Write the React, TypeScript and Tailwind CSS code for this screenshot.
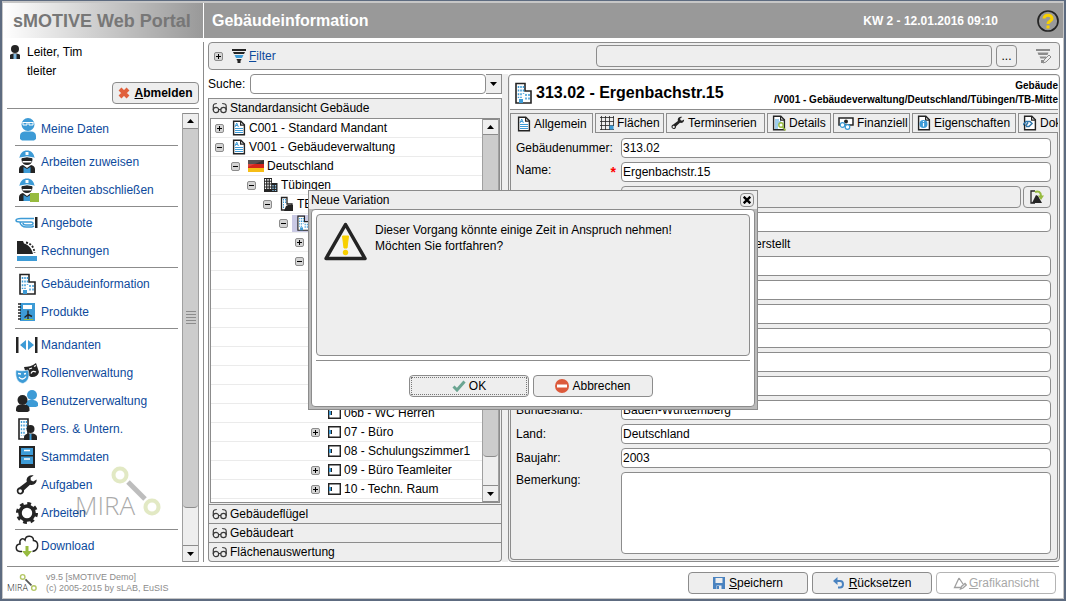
import React from 'react';
import clsx from 'clsx';

const INK = '#242424';
const BLUE = '#3d9bd6';
const GREEN = '#97bb3f';

type IconProps = { className?: string };

const Building = ({ className = 'w-[18px] h-[22px]' }: IconProps) => (
    <svg className={className} viewBox="2 0 18 22" fill="none">
        <path d="M4 21V1.500h9V9h6v12z" fill="#fff" stroke={INK} strokeWidth="1.600" />
        <path d="M6.500 4v12M9 4v12M11.500 4v8M14 12v7M17 12v7" stroke={BLUE} strokeWidth="1.500" strokeDasharray="2 1.600" />
        <path d="M7 17h4v4H7z" fill={BLUE} />
    </svg>
);

const Doc = ({ className = 'w-3.5 h-4', children }: IconProps & { children?: React.ReactNode }) => (
    <svg className={className} viewBox="0 0 14 16" fill="none">
        <path d="M1.600 1.200h7.200l3.600 3.600v10H1.600z" fill="#fff" stroke={INK} strokeWidth="1.400" />
        <path d="M8.600 1.200v4h4" stroke={INK} strokeWidth="1.200" />
        {children}
    </svg>
);

const DocText = () => (
    <Doc>
        <path d="M3 8.500h8M3 10.500h8M3 12.500h8" stroke={BLUE} strokeWidth="1" />
        <path d="M3 7l1.700-4 1.700 4M3.700 5.500h2" stroke={BLUE} strokeWidth="1" />
    </Doc>
);

const Wrench = ({ className = 'w-[22px] h-[22px]' }: IconProps) => (
    <svg className={className} viewBox="0 0 22 22">
        <path
            fill={INK}
            fillRule="evenodd"
            d="M20.600 5.600l-3.400 2-2.500-1.300-.1-2.800L17.700 1.600C14.800.400 11 2 10.600 5.600c-.1 1 .1 1.700.2 2.100L3.500 13.200C1 13.800.300 16 1 18.200c.9 2.400 4 3 5.800 1.300 1.100-1 1.400-2 1.200-3.200l6-5.500c3.800 1 7-1.600 6.600-5.200zM4.200 15.300a1.800 1.800 0 1 1 0 3.600 1.800 1.800 0 0 1 0-3.600z"
        />
    </svg>
);

const UserBlue = () => (
    <svg className="w-[22px] h-[24px]" viewBox="0 0 22 24">
        <circle cx="12" cy="7.500" r="6.500" fill={BLUE} />
        <path d="M4 22v-3c0-3.500 3-4.500 5-4.500h6c3 0 5 1.500 5 4.500v3l-2 1.500H6z" fill={BLUE} />
        <path d="M6.500 5.500h11M7 5.500v2.500h4V5.500M13 5.500v2.500h4V5.500" fill="none" stroke="#fff" strokeWidth="1" />
    </svg>
);

const Worker = ({ done }: { done?: boolean }) => (
    <svg className="w-6 h-6" viewBox="0 0 24 24">
        <circle cx="12" cy="9.500" r="5.500" fill={INK} />
        <path d="M4 23v-4c0-2.500 2-3.500 4-4l4 3 4-3c2 .5 4 1.500 4 4v4z" fill={INK} />
        <path d="M8.500 23v-6l3.500 2 3.500-2v6z" fill={BLUE} />
        <path d="M7.500 11h9v1.500h-9z" fill="#fff" />
        <path d="M4.500 8C5 3 8 .5 12 .5S19 3 19.500 8l-7.500-1z" fill={BLUE} />
        <path d="M10.500 2h3v3h-3z" fill="#fff" />
        <path d="M5 8q7-2.500 14 0" fill="none" stroke="#fff" strokeWidth="1" />
        {done && <path d="M15 15h9v9h-9z" fill={GREEN} />}
    </svg>
);

const Hand = () => (
    <svg className="w-6 h-6" viewBox="0 0 24 24" fill="none">
        <path
            d="M19 7.500H6c-2 0-5 .5-5 2s2 1.500 4 1.500h4M5 11c0 3 3 5 6 5h6l2-1M9 11h7c3 0 2.500 3 0 3h-5c-2 0-3-1-3-2"
            stroke={BLUE}
            strokeWidth="1.500"
        />
        <path d="M20 6h2.500v11H20z" fill={INK} />
    </svg>
);

const Ledger = () => (
    <svg className="w-6 h-6" viewBox="0 0 24 24">
        <path d="M2 15V2h6l1 2.500c4 1 8 5 9 10.500z" fill={INK} />
        <path d="M11 3.500c5 1 8 4.500 8.500 10.500" fill="none" stroke={INK} strokeWidth="1.800" strokeDasharray="2 1.500" />
        <path d="M2 17h20v5H2z" fill={BLUE} />
    </svg>
);

const Product = () => (
    <svg className="w-6 h-6" viewBox="0 0 24 24">
        <path d="M5 3h15v18H5z" fill={BLUE} />
        <path d="M3 4h3M3 7h3M3 10h3M3 13h3M3 16h3M3 19h3" stroke={INK} strokeWidth="1.300" />
        <path d="M8 5h9v4H8z" fill="#fff" />
        <path d="M13 10.500v4l-3.500 3M13 14.500l4 2M13 14.500V19" fill="none" stroke={INK} strokeWidth="1.400" />
        <path d="M9 19.500h9" stroke={GREEN} />
    </svg>
);

const Clients = () => (
    <svg className="w-6 h-6" viewBox="0 0 24 24">
        <path d="M1 4h2.500v16H1zM20 4h2.500v16H20z" fill={INK} />
        <path d="M11 7v10l-6-5zM13 7v10l6-5z" fill={BLUE} />
    </svg>
);

const Masks = () => (
    <svg className="w-6 h-6" viewBox="0 0 24 24" fill="none">
        <path d="M9 6c4 0 8-1 12-4l3 9c-1 4-4 5.500-8 5l-5-3z" fill={INK} />
        <path d="M14 8l3-1M19 5.500l2-1M16 12.500c1-2.500 3-2.500 5-1.500" stroke="#fff" strokeWidth="1.300" />
        <path d="M1 9c4 1 8 1 12 0 2 6 1 11-5 13.500C2 21.500 0 16 1 9z" fill={BLUE} stroke="#fff" strokeWidth=".6" />
        <path d="M3 12.500l3 .5M9 13l2-.5M4 16c2 3 5 2.500 7-.5" stroke="#fff" strokeWidth="1.300" />
    </svg>
);

const Users = () => (
    <svg className="w-6 h-6" viewBox="0 0 24 24">
        <circle cx="17" cy="6" r="5" fill={BLUE} />
        <path d="M11 18v-5c2-3 10-3 12 1v3l-2 1z" fill={BLUE} />
        <circle cx="7.500" cy="11" r="5" fill={INK} />
        <path d="M1 22v-2c0-3 2-4 4-4.500h5c3 .5 4.500 2 4.500 4.500v2l-2 1H3z" fill={INK} />
    </svg>
);

const PersonBuilding = () => (
    <svg className="w-6 h-6" viewBox="0 0 24 24" fill="none">
        <path d="M4 22V2h9v20z" stroke={INK} strokeWidth="1.600" fill="#fff" />
        <path d="M6.500 4v15M9 4v15M11.500 4v8" stroke={BLUE} strokeWidth="1.400" strokeDasharray="2 1.600" />
        <circle cx="15.500" cy="12" r="4" fill={INK} />
        <path d="M9 23v-3c0-2 2-3 4-3.500h5c2 .5 4 1.500 4 3.500v3z" fill={INK} />
        <path d="M14.500 17h2v6h-2z" fill={BLUE} />
    </svg>
);

const Cabinet = () => (
    <svg className="w-6 h-6" viewBox="0 0 24 24">
        <path d="M4 1h16v22H4z" fill={INK} />
        <path d="M6 3h12v7H6zM6 11.500h12V19H6z" fill={BLUE} />
        <path d="M9 5.500h6M9 14h6" stroke="#fff" strokeWidth="1.500" />
    </svg>
);

const Gear = () => (
    <svg className="w-6 h-6" viewBox="0 0 24 24" fill="none">
        <circle cx="12" cy="12" r="7" stroke={INK} strokeWidth="3.600" />
        <circle cx="12" cy="12" r="9.500" stroke={INK} strokeWidth="3" strokeDasharray="3.730 3.730" />
    </svg>
);

const Cloud = () => (
    <svg className="w-6 h-6" viewBox="0 0 24 24" fill="none">
        <path
            d="M7 17.500H5c-5-.5-5-7 0-7.500-1-5 3-6.500 5-4 1-5.500 8.500-4.500 8.500.5 5.500.5 6 9.500-1 11"
            stroke={INK}
            strokeWidth="1.500"
        />
        <path d="M10.500 12h3v5H17l-5 6-5-6h3.500z" fill={GREEN} />
    </svg>
);

const Glasses = () => (
    <svg className="w-4 h-3 shrink-0" viewBox="0 0 16 12" fill="none" stroke="#3a3a3a" strokeWidth="1.200">
        <circle cx="4" cy="8" r="2.700" />
        <circle cx="11.500" cy="8" r="2.700" />
        <path d="M6.500 7.500h2.500M1.300 8V4c0-2 2-2.500 3.500-2.500M14.200 8V4c0-2-2-2.500-4-2.500" />
    </svg>
);

const Flag = () => (
    <svg className="w-4 h-3" viewBox="0 0 16 12">
        <path d="M0 0h16v4H0z" fill="#3b3334" />
        <path d="M0 4h16v4H0z" fill="#d4251c" />
        <path d="M0 8h16v4H0z" fill="#f6bd16" />
        <path d="M0 0h16L0 7z" fill="#fff" opacity=".15" />
    </svg>
);

const City = () => (
    <svg className="w-3.5 h-3.5" viewBox="0 0 14 14">
        <path d="M0 0h8v5h5.500v9H0z" fill={INK} />
        <path d="M1.500 1v10M4 1v10M6.500 1v10" stroke="#fff" strokeWidth="1.300" strokeDasharray="1.800 1" />
        <path d="M9 7v6M11.500 7v6" stroke="#8fc6ea" strokeWidth="1.300" strokeDasharray="1.500 1" />
    </svg>
);

const Site = () => (
    <svg className="w-3.5 h-4" viewBox="0 0 14 16" fill="none">
        <path d="M1.500 14V1.500H7V8h5v6z" fill="#fff" stroke={INK} strokeWidth="1.300" />
        <path d="M3.500 3v9M5.500 3v4" stroke={BLUE} strokeDasharray="1.500 1" />
        <path d="M4 15l2-5 2-1h5v6z" fill={INK} />
    </svg>
);

const Room = () => (
    <svg className="w-[13px] h-3" viewBox="0 0 13 12">
        <path d="M.7.700h11.600v10.600H.7z" fill="#fff" stroke={INK} strokeWidth="1.400" />
        <path d="M1 4h3v4H1z" fill={BLUE} />
        <path d="M3.500 4v4" stroke={INK} />
    </svg>
);

const Funnel = ({ className }: IconProps) => (
    <svg className={className} viewBox="0 0 16 16">
        <path d="M1 1h14v2H1zM2 4h12l-1 2H3z" fill={INK} />
        <path d="M3.500 7h9l-1.500 3H5z" fill={BLUE} />
        <path d="M5.500 11h5l-.5 1.500H6zM6.500 12.500h3V15h-3z" fill={INK} />
    </svg>
);

const MiraLogo = ({ className, faded }: { className: string; faded?: boolean }) => (
    <svg className={className} viewBox="0 0 86 52" overflow="visible">
        <g opacity={faded ? 0.38 : 1}>
            <circle cx="45" cy="10" r="6.500" fill="none" stroke="#b4c765" strokeWidth="4" />
            <circle cx="77" cy="42" r="6.500" fill="none" stroke="#b4c765" strokeWidth="4" />
            <path d="M53 17l17 17" stroke="#555" strokeWidth="5" />
            <text x="0" y="50" fontSize="26" fontWeight="300" fontFamily="'Open Sans', 'Noto Sans', sans-serif" fill="#222">
                MIRA
            </text>
        </g>
    </svg>
);

const Caret = ({ up }: { up?: boolean }) => (
    <svg className="w-[7px] h-1" viewBox="0 0 7 4">
        <path d={up ? 'M0 4h7L3.500 0z' : 'M0 0h7L3.500 4z'} />
    </svg>
);

const Scrollbar = ({ thumb, grip }: { thumb: string; grip?: boolean }) => (
    <div className="flex w-[17px] shrink-0 flex-col border-x border-[#a0a0a0] bg-[#eee]">
        <button className="flex h-4 items-center justify-center border-y border-[#8c8c8c] bg-[#eee]" aria-label="Nach oben">
            <Caret up />
        </button>
        <div className="min-h-0 flex-1">
            <div className={clsx('flex items-center justify-center rounded-b-sm border-b border-[#8c8c8c] bg-[#ccc]', thumb)}>
                {grip && (
                    <div className="flex flex-col gap-0.5">
                        {[0, 1, 2, 3, 4].map((i) => (
                            <div key={i} className="h-px w-2.5 bg-[#8c8c8c]" />
                        ))}
                    </div>
                )}
            </div>
        </div>
        <button className="flex h-[17px] items-center justify-center border-y border-[#8c8c8c] bg-[#eee]" aria-label="Nach unten">
            <Caret />
        </button>
    </div>
);

const menu = [
    [['Meine Daten', <UserBlue />]],
    [['Arbeiten zuweisen', <Worker />], ['Arbeiten abschließen', <Worker done />]],
    [['Angebote', <Hand />], ['Rechnungen', <Ledger />]],
    [['Gebäudeinformation', <Building />], ['Produkte', <Product />]],
    [
        ['Mandanten', <Clients />],
        ['Rollenverwaltung', <Masks />],
        ['Benutzerverwaltung', <Users />],
        ['Pers. & Untern.', <PersonBuilding />],
        ['Stammdaten', <Cabinet />],
        ['Aufgaben', <Wrench />],
        ['Arbeiten', <Gear />],
    ],
    [['Download', <Cloud />]],
] as [string, React.ReactNode][][];

const Sidebar = () => (
    <aside className="flex w-[201px] shrink-0 flex-col border-r border-[#8c8c8c] pl-1 pr-1">
        <div className="flex h-[19px] items-center gap-1.5 pl-0.5">
            <svg className="w-3 h-3.5" viewBox="0 0 12 14">
                <circle cx="6" cy="4" r="4" fill={INK} />
                <path d="M1 14v-4c1-2 9-2 10 0v4z" fill={INK} />
                <path d="M4.500 9h3v5h-3z" fill="#7fb8e0" />
            </svg>
            <span>Leiter, Tim</span>
        </div>
        <div className="flex h-5 items-center pl-5">tleiter</div>
        <div className="flex justify-end border-b border-[#8c8c8c] pt-px pb-1">
            <button className="flex h-[22px] w-[87px] items-center justify-center gap-1 rounded-sm border border-[#8c8c8c] bg-[#eee] font-bold">
                <svg className="w-3 h-3" viewBox="0 0 12 12">
                    <path d="M2 2l8 8M10 2l-8 8" stroke="#e0603c" strokeWidth="4" />
                </svg>
                <span><u>A</u>bmelden</span>
            </button>
        </div>
        <div className="mt-1 flex min-h-0 flex-1 overflow-hidden">
            <nav className="relative flex-1 pl-2 pr-1 pt-0.5">
                {menu.map((group, gi) => (
                    <div key={gi} className={clsx(gi > 0 && 'mt-0.5 border-t border-[#8c8c8c] pt-0.5')}>
                        {group.map(([label, icon]) => (
                            <a key={label} href="#" className="flex h-7 items-center gap-0.5 whitespace-nowrap text-[#0d4a9c]">
                                <span className="flex w-6 items-center justify-center">{icon}</span>
                                {label}
                            </a>
                        ))}
                    </div>
                ))}
                <MiraLogo faded className="pointer-events-none absolute bottom-[45px] left-[68px] h-[52px] w-[86px]" />
            </nav>
            <Scrollbar thumb="h-[91%]" grip />
        </div>
    </aside>
);

const tree: { level: number; exp?: '+' | '-'; icon?: React.ReactNode; label?: string; selected?: boolean }[] = [
    { level: 0, exp: '+', icon: <DocText />, label: 'C001 - Standard Mandant' },
    { level: 0, exp: '-', icon: <DocText />, label: 'V001 - Gebäudeverwaltung' },
    { level: 1, exp: '-', icon: <Flag />, label: 'Deutschland' },
    { level: 2, exp: '-', icon: <City />, label: 'Tübingen' },
    { level: 3, exp: '-', icon: <Site />, label: 'TB-Mitte' },
    { level: 4, exp: '-', icon: <Building className="w-3.5 h-4" />, label: '313.02 - Ergenbachstr.15', selected: true },
    { level: 5, exp: '+' },
    { level: 5, exp: '-' },
    { level: 6 },
    { level: 6 },
    { level: 6 },
    { level: 6 },
    { level: 6 },
    { level: 6 },
    { level: 6 },
    { level: 6, icon: <Room />, label: '06b - WC Herren' },
    { level: 6, exp: '+', icon: <Room />, label: '07 - Büro' },
    { level: 6, icon: <Room />, label: '08 - Schulungszimmer1' },
    { level: 6, exp: '+', icon: <Room />, label: '09 - Büro Teamleiter' },
    { level: 6, exp: '+', icon: <Room />, label: '10 - Techn. Raum' },
];

const Expander = ({ sign }: { sign: '+' | '-' }) => (
    <svg className="w-[9px] h-[9px]" viewBox="0 0 9 9">
        <rect x=".5" y=".5" width="8" height="8" rx="1.500" fill="#d4d4d4" stroke="#8c8c8c" />
        <path d={sign === '+' ? 'M2 4.500h5M4.500 2v5' : 'M2 4.500h5'} stroke="#000" />
    </svg>
);

const AccordionHeader = ({ children }: { children: string }) => (
    <button className="flex h-[19px] w-full shrink-0 items-center gap-0.5 border-t border-[#8c8c8c] pl-[3px] text-left">
        <Glasses />
        {children}
    </button>
);

const TreePanel = () => (
    <section className="flex w-[294px] shrink-0 flex-col">
        <div className="flex h-5 items-stretch">
            <label htmlFor="suche" className="flex w-[42px] items-center">Suche:</label>
            <input id="suche" className="min-w-0 flex-1 rounded-sm border border-[#8c8c8c] bg-white px-0.5" />
            <button className="flex w-4 items-center justify-center border border-l-0 border-[#8c8c8c] bg-[#eee]" aria-label="Suchliste">
                <Caret />
            </button>
        </div>
        <div className="mt-1 flex min-h-0 flex-1 flex-col rounded-b-sm border border-t-0 border-[#8c8c8c] bg-[#eee]">
            <AccordionHeader>Standardansicht Gebäude</AccordionHeader>
            <div className="m-px flex min-h-0 flex-1 border border-[#8c8c8c] bg-white">
                <ul className="min-w-0 flex-1 overflow-hidden">
                    {tree.map((node, i) => (
                        <li key={i} className="flex h-[19px] items-center border-b border-[#ebebeb] whitespace-nowrap" style={{ paddingLeft: 4 + node.level * 16 }}>
                            <span className="flex w-[13px] shrink-0">{node.exp && <Expander sign={node.exp} />}</span>
                            <span className={clsx('flex h-[17px] items-center gap-[3px] pl-1', node.selected && 'bg-[#c9c9e4]')}>
                                {node.icon}
                                {node.label}
                            </span>
                        </li>
                    ))}
                </ul>
                <Scrollbar thumb="h-[92%]" />
            </div>
            <AccordionHeader>Gebäudeflügel</AccordionHeader>
            <AccordionHeader>Gebäudeart</AccordionHeader>
            <AccordionHeader>Flächenauswertung</AccordionHeader>
        </div>
    </section>
);

const tabs: [string, string, React.ReactNode][] = [
    ['Allgemein', 'w-[83px]', <DocText />],
    ['Flächen', 'w-[69px]', (
        <svg className="w-3.5 h-3.5" viewBox="0 0 14 14" fill="none">
            <path d="M0 1.500h14M0 5.500h14M0 9.500h14M0 13.500h14M1.500 0v14M5.500 0v14M9.500 0v14M13.500 0v10" stroke={INK} strokeWidth=".8" />
            <path d="M9.500 9.500h4v4h-4z" fill={BLUE} />
        </svg>
    )],
    ['Terminserien', 'w-[99px]', <Wrench className="w-3.5 h-3.5" />],
    ['Details', 'w-[64px]', (
        <Doc>
            <path d="M3 5h4M3 7h6M3 9h4M3 11h3M3 13h3" stroke={BLUE} />
            <circle cx="9" cy="10" r="2.200" stroke={GREEN} strokeWidth="1.400" />
            <path d="M10.500 12l3 3.500" stroke={GREEN} strokeWidth="1.600" />
        </Doc>
    )],
    ['Finanziell', 'w-[77px]', (
        <svg className="w-4 h-3.5" viewBox="0 0 16 14" fill="none">
            <path d="M1 2h14v7H1z" stroke={INK} strokeWidth="1.500" fill="#fff" />
            <circle cx="8" cy="5.500" r="2" fill={INK} />
            <circle cx="4.500" cy="9" r="2.300" stroke={BLUE} fill="#fff" strokeWidth="1.200" />
            <circle cx="9.500" cy="11" r="2.300" stroke={BLUE} fill="#fff" strokeWidth="1.200" />
        </svg>
    )],
    ['Eigenschaften', 'w-[104px]', (
        <Doc>
            <circle cx="6.500" cy="9" r="4" fill={BLUE} />
            <path d="M6.500 8v3.500M6.500 6v1" stroke="#fff" strokeWidth="1.200" />
        </Doc>
    )],
    ['Dokumente', 'w-[90px]', (
        <Doc>
            <path d="M0 10l3-3.500h4l2 2-3 3H3M5 7.500L2.500 11" stroke="#2f76ab" strokeWidth="1.500" />
        </Doc>
    )],
];

const fieldClass = 'h-5 min-w-0 flex-1 rounded-sm border border-[#8c8c8c] bg-white px-px';

const Field = ({ id, label, value, required }: { id: string; label?: string; value?: string; required?: boolean }) => (
    <div className="flex items-center">
        <label htmlFor={id} className="flex w-[105px] shrink-0 justify-between pr-[5px]">
            {label}
            {required && <span className="text-sm font-bold text-[#f00]">*</span>}
        </label>
        <input id={id} defaultValue={value} aria-label={label ?? id} className={fieldClass} />
    </div>
);

const DetailPanel = () => (
    <section className="flex min-w-0 flex-1 flex-col rounded-sm border border-[#8c8c8c] bg-[#eee] p-px">
        <header className="flex h-[34px] shrink-0 items-center justify-between border-b border-[#8c8c8c] bg-white pl-1">
            <div className="flex items-center gap-1">
                <Building className="w-[18px] h-[22px]" />
                <h2 className="text-base font-bold">313.02 - Ergenbachstr.15</h2>
            </div>
            <div className="text-right text-[10px] leading-[14px] font-bold">
                <div>Gebäude</div>
                <div>/V001 - Gebäudeverwaltung/Deutschland/Tübingen/TB-Mitte</div>
            </div>
        </header>
        <div role="tablist" className="mt-[3px] flex h-5 shrink-0 gap-0.5 overflow-hidden">
            {tabs.map(([label, width, icon], i) => (
                <button
                    key={label}
                    role="tab"
                    aria-selected={i === 0}
                    className={clsx(
                        'flex shrink-0 items-center gap-[3px] overflow-hidden border-x border-t border-[#8c8c8c] pl-1 whitespace-nowrap',
                        width,
                        i === 0 ? 'pl-1.5' : 'border-b',
                    )}
                >
                    {icon}
                    {label}
                </button>
            ))}
        </div>
        <form className="flex min-h-0 flex-1 flex-col gap-1 rounded-b-sm border border-t-0 border-[#8c8c8c] py-[5px] pl-[5px] pr-1.5">
            <Field id="nummer" label="Gebäudenummer:" value="313.02" />
            <Field id="name" label="Name:" value="Ergenbachstr.15" required />
            <div className="flex h-[22px] gap-0.5 pl-[105px]">
                <input readOnly aria-label="Bild" className="min-w-0 flex-1 rounded-sm border border-[#8c8c8c] bg-[#eee]" />
                <button type="button" className="flex w-[28px] items-center justify-center rounded-sm border border-[#8c8c8c] bg-[#eee]" aria-label="Bild öffnen">
                    <svg className="w-3.5 h-3.5" viewBox="0 0 14 14" fill="none">
                        <path d="M5 1H1v12h4" stroke={INK} strokeWidth="1.300" />
                        <path d="M2 13l4-8 2 1 4 7z" fill={INK} />
                        <path d="M5 2c3-1.500 6 0 6 4" stroke={GREEN} strokeWidth="2" />
                        <path d="M8 5.500h6L11 10z" fill={GREEN} />
                    </svg>
                </button>
            </div>
            <Field id="feld4" />
            <div className="flex h-4 items-center pl-[239px]">erstellt</div>
            <Field id="feld5" />
            <Field id="feld6" />
            <Field id="feld7" />
            <Field id="feld8" />
            <Field id="feld9" />
            <Field id="feld10" />
            <Field id="bundesland" label="Bundesland:" value="Baden-Württemberg" />
            <Field id="land" label="Land:" value="Deutschland" />
            <Field id="baujahr" label="Baujahr:" value="2003" />
            <div className="flex min-h-0 flex-1">
                <label htmlFor="bemerkung" className="w-[105px] shrink-0">Bemerkung:</label>
                <textarea id="bemerkung" className="min-w-0 flex-1 resize-none rounded-sm border border-[#8c8c8c] bg-white" />
            </div>
        </form>
    </section>
);

const FilterBar = () => (
    <div className="flex h-7 shrink-0 items-center rounded-sm border border-[#8c8c8c] bg-[#eee] pl-[5px] pr-2">
        <Expander sign="+" />
        <Funnel className="ml-2 mr-0.5 h-4 w-4" />
        <a href="#" className="text-[#0d4a9c]"><u>F</u>ilter</a>
        <input readOnly aria-label="Filter" className="ml-auto h-[22px] w-[396px] min-w-0 rounded-sm border border-[#8c8c8c] bg-[#eee] px-1" />
        <button className="ml-1 h-[22px] w-[21px] rounded-sm border border-[#8c8c8c]">...</button>
        <svg className="ml-[18px] h-4 w-4" viewBox="0 0 16 16" aria-label="Filter bearbeiten">
            <path d="M1 1h14v2H1zM2.500 4.500h11l-1 2.500h-9zM4.500 8.500h7l-1 2h-5zM6 12h3v3H6z" fill="#8c8c8c" />
            <path d="M8 15l1-3 5-5 2 2-5 5z" fill="#eee" stroke="#8c8c8c" />
        </svg>
    </div>
);

const Footer = () => (
    <footer className="mx-1 mt-1 flex h-8 shrink-0 items-center border-t border-[#8c8c8c]">
        <MiraLogo className="h-[19px] w-[30px]" />
        <div className="ml-[9px] text-[9px] leading-[11px] text-[#8c8c8c]">
            <div>v9.5 [sMOTIVE Demo]</div>
            <div>(c) 2005-2015 by sLAB, EuSIS</div>
        </div>
        <div className="ml-auto mr-[3px] flex gap-1">
            <button className="flex h-[22px] w-[120px] items-center justify-center gap-1 rounded-sm border border-[#8c8c8c] bg-[#eee]">
                <svg className="w-3 h-3" viewBox="0 0 12 12">
                    <path d="M0 0h12v12H0z" fill="#4a83c0" />
                    <path d="M2.500 1h7v5h-7zM3.500 8.500h5V12h-5z" fill="#eee" />
                    <path d="M4 9h2v3H4z" fill="#4a83c0" />
                </svg>
                <span><u>S</u>peichern</span>
            </button>
            <button className="flex h-[22px] w-[120px] items-center justify-center gap-1 rounded-sm border border-[#8c8c8c] bg-[#eee]">
                <svg className="w-3 h-3" viewBox="0 0 12 12" fill="none">
                    <path d="M2 4h5c4 0 4 6.500 0 6.500H5" stroke="#4a83c0" strokeWidth="2" />
                    <path d="M0 4l4.500-4v8z" fill="#4a83c0" />
                </svg>
                <span><u>R</u>ücksetzen</span>
            </button>
            <button disabled className="flex h-[22px] w-[120px] items-center justify-center gap-0.5 rounded-sm border border-[#b4b4b4] text-[#a8a8a8]">
                <svg className="w-3.5 h-3.5" viewBox="0 0 14 14" fill="none" stroke="#a0a0a0" strokeWidth="1.300">
                    <path d="M6 2L1.500 11.500H8M6 2l4 6M7.500 13l1-2.500 3.500-3 1.300 1.500L10 12z" />
                </svg>
                <span><u>G</u>rafikansicht</span>
            </button>
        </div>
    </footer>
);

const ConfirmDialog = () => (
    <div className="pointer-events-none absolute inset-0 flex items-center justify-center">
        <div role="dialog" aria-label="Neue Variation" className="pointer-events-auto flex h-[220px] w-[450px] flex-col border border-[#8c8c8c] bg-[#bababa]">
            <div className="flex h-[18px] items-center justify-between bg-[#eee] pl-0.5 pr-[3px]">
                <span>Neue Variation</span>
                <button className="flex h-3.5 w-3.5 items-center justify-center rounded-sm border border-[#8c8c8c] bg-[#eee]" aria-label="Schließen">
                    <svg className="w-2 h-2" viewBox="0 0 8 8">
                        <path d="M.7.700l6.600 6.600M7.300.700L.7 7.300" stroke="#000" strokeWidth="2.400" />
                    </svg>
                </button>
            </div>
            <div className="mx-0.5 mb-0.5 flex min-h-0 flex-1 flex-col rounded-sm border border-[#8c8c8c] bg-white px-1 pt-1">
                <div className="flex h-[142px] shrink-0 gap-2 rounded-sm border border-[#8c8c8c] bg-[#eee] px-[7px] py-[7px]">
                    <svg className="w-[43px] h-[39px]" viewBox="0 0 43 39">
                        <path d="M21.500 2.500L41 36.500H2z" fill="#fff" fillOpacity=".3" stroke={INK} strokeWidth="3.500" strokeLinejoin="round" />
                        <path d="M18.500 14h6L23 26h-3z" fill="#f8d000" stroke="#f8d000" strokeLinejoin="round" />
                        <circle cx="21.500" cy="30.500" r="2.700" fill="#f8d000" />
                    </svg>
                    <p className="leading-4">
                        Dieser Vorgang könnte einige Zeit in Anspruch nehmen!
                        <br />
                        Möchten Sie fortfahren?
                    </p>
                </div>
                <div className="mt-1 flex justify-center gap-1 border-t border-[#8c8c8c] pt-3.5 pr-1">
                    <button className="h-[22px] w-[120px] rounded-sm border border-[#8c8c8c] bg-[#eee] p-px">
                        <span className="flex h-full items-center justify-center gap-[3px] border border-dotted border-[#777]">
                            <svg className="w-3.5 h-3" viewBox="0 0 14 12">
                                <path d="M1.500 6.500l3.500 3.500L12.500 1.500" fill="none" stroke="#6ba592" strokeWidth="3" />
                            </svg>
                            OK
                        </span>
                    </button>
                    <button className="flex h-[22px] w-[120px] items-center justify-center gap-[3px] rounded-sm border border-[#8c8c8c] bg-[#eee]">
                        <svg className="w-3.5 h-3.5" viewBox="0 0 14 14">
                            <circle cx="7" cy="7" r="7" fill="#dc5a3c" />
                            <path d="M2 5.500h10v3H2z" fill="#fff" />
                        </svg>
                        Abbrechen
                    </button>
                </div>
            </div>
        </div>
    </div>
);

export default function App() {
    return (
        <div className="relative flex h-screen w-full flex-col border-2 border-t border-[#5d6b80] bg-white font-['Liberation_Sans',Arial,sans-serif] text-[12px] leading-4 text-black">
            <div className="flex min-h-0 flex-1 flex-col border border-t-2 border-[#c6c6c6]">
                <header className="flex h-[35px] shrink-0 items-center bg-[#999]">
                    <div className="flex h-full w-[201px] items-center border-r border-dotted border-white bg-linear-to-r from-white to-[#999] pl-2.5 text-lg font-bold text-[#777]">
                        sMOTIVE Web Portal
                    </div>
                    <h1 className="ml-2 text-base font-bold text-white">Gebäudeinformation</h1>
                    <span className="ml-auto font-bold text-white">KW 2 - 12.01.2016 09:10</span>
                    <button className="mr-1 ml-[39px]" aria-label="Hilfe">
                        <svg className="h-[22px] w-[22px]" viewBox="0 0 22 22" fill="none">
                            <circle cx="11" cy="11" r="10" stroke={INK} strokeWidth="1.700" />
                            <path d="M7 8.500c0-4.500 8-4.500 8 0 0 2.500-4 2.500-4 5.500" stroke="#f8d000" strokeWidth="3" />
                            <path d="M9.500 15.500h3v3h-3z" fill="#f8d000" />
                        </svg>
                    </button>
                </header>
                <div className="mt-1 flex min-h-0 flex-1 gap-1">
                    <Sidebar />
                    <main className="mr-[3px] flex min-w-0 flex-1 flex-col gap-1">
                        <FilterBar />
                        <div className="flex min-h-0 flex-1">
                            <TreePanel />
                            <div className="w-1.5 shrink-0 bg-[#eee]" />
                            <DetailPanel />
                        </div>
                    </main>
                </div>
                <Footer />
            </div>
            <ConfirmDialog />
        </div>
    );
}
